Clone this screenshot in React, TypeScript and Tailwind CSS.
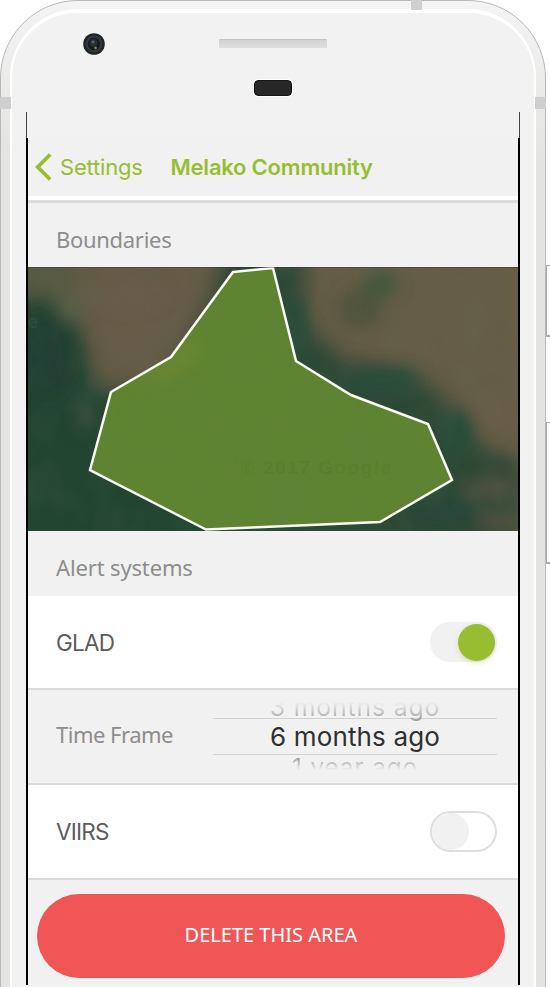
import React from "react";

const sans = "font-['Inter','Liberation_Sans',sans-serif]";
const human = "font-['Noto_Sans','Open_Sans',sans-serif]";

function TopHardware() {
  return (
    <div className="grid h-[99px] grid-cols-[206px_108px_1fr] grid-rows-[20px_22px_25px_17px_1fr]">
      <div className="col-start-1 row-start-2 pl-[70px]">
        <svg className="block" width="22" height="22" viewBox="0 0 22 22">
          <circle cx="11" cy="11" r="10.8" fill="#202428" />
          <circle cx="11" cy="11" r="8.4" fill="#34393e" />
          <circle cx="11" cy="11" r="6.2" fill="#15191d" />
          <circle cx="10.5" cy="10" r="4" fill="#252f38" />
          <circle cx="10" cy="9" r="1.6" fill="#56616a" />
          <circle cx="12.5" cy="15" r="1.3" fill="#839333" />
        </svg>
      </div>
      <div className="col-start-2 row-start-2 mt-[6px] h-[9px] rounded-[1px] border-t border-[#c4c4c4] bg-linear-to-b from-[#d2d2d2] to-[#dfdfdf]" />
      <div className="col-start-2 row-start-4 h-4 w-[38px] justify-self-center rounded-[4px] border border-[#151515] bg-[#272727] outline-1 outline-white" />
    </div>
  );
}

function NavBar() {
  return (
    <div className={`flex h-[65px] items-center border-b-[3px] border-[#dcdcdc] text-[#97be32] ${sans}`}>
      <div className="flex h-full w-full items-center border-b-4 border-white pl-[7px]">
        <svg className="block shrink-0" width="17" height="28" viewBox="0 0 17 28">
          <path d="M15.2 1.5 2.7 14 15.2 26.5" fill="none" stroke="#97be32" strokeWidth="3.8" />
        </svg>
        <span className="ml-2 w-[110.5px] text-[22px] tracking-[-0.2px]">Settings</span>
        <span className="whitespace-nowrap text-[22px] font-semibold tracking-[-0.22px]">Melako Community</span>
      </div>
    </div>
  );
}

function AreaMap() {
  const outline = "205,5 245,1 268,94 323,128 400,157 424,213 352,255 178,262.5 62,203 83,125 143,90";
  return (
    <svg className="block" width="490" height="264" viewBox="0 0 490 264">
      <defs>
        <filter id="soft" x="-50%" y="-50%" width="200%" height="200%">
          <feGaussianBlur stdDeviation="11" />
        </filter>
        <filter id="patch" x="-100%" y="-100%" width="300%" height="300%">
          <feGaussianBlur stdDeviation="8" />
        </filter>
        <filter id="terrain" x="0" y="0" width="100%" height="100%">
          <feTurbulence type="fractalNoise" baseFrequency="0.03 0.02" numOctaves="3" seed="8" />
          <feColorMatrix values="0 0 0 0 0.12  0 0 0 0 0.17  0 0 0 0 0.13  1.6 0 0 0 -0.65" />
        </filter>
        <clipPath id="frame"><rect width="490" height="264" /></clipPath>
        <clipPath id="field"><polygon points={outline} /></clipPath>
      </defs>
      <g clipPath="url(#frame)">
        <rect width="490" height="264" fill="#625c45" />
        <g filter="url(#soft)">
          <path d="M-30 28 35 32 56 70 68 125 110 120 240 264 500 300-30 300Z" fill="#234432" />
          <path d="M205-20 280-20 272 60 350 100 410 120 435 165 500 210 480 290 200 290 150 100Z" fill="#2d4936" />
          <path d="M-20-15 45-10 50 18-20 25Z" fill="#575940" />
          <path d="M60 10 175 4 155 70 90 112 65 70Z" fill="#675b49" />
          <path d="M285-10 510-10 510 180 460 165 415 115 320 92 300 72Z" fill="#665d46" />
        </g>
        <g filter="url(#patch)">
          <ellipse cx="208" cy="8" rx="8" ry="15" fill="#2f4a35" />
          <ellipse cx="352" cy="17" rx="18" ry="13" fill="#3d563a" opacity=".9" />
          <ellipse cx="332" cy="42" rx="24" ry="20" fill="#4b523b" opacity=".75" />
          <ellipse cx="267" cy="62" rx="13" ry="35" fill="#2b4b39" />
          <ellipse cx="355" cy="113" rx="38" ry="14" fill="#2a4d3b" />
          <ellipse cx="430" cy="165" rx="17" ry="24" fill="#264d39" />
          <ellipse cx="464" cy="222" rx="31" ry="10" fill="#514f40" />
          <ellipse cx="470" cy="145" rx="25" ry="20" fill="#695d4a" />
          <ellipse cx="475" cy="200" rx="16" ry="9" fill="#344a3a" />
          <ellipse cx="470" cy="255" rx="22" ry="9" fill="#57513f" />
          <ellipse cx="415" cy="245" rx="35" ry="17" fill="#28463a" />
          <ellipse cx="58" cy="150" rx="9" ry="14" fill="#465140" opacity=".8" />
          <ellipse cx="42" cy="40" rx="12" ry="13" fill="#5d6147" />
          <ellipse cx="18" cy="90" rx="26" ry="42" fill="#204134" />
          <ellipse cx="100" cy="27" rx="35" ry="13" fill="#6a5b4b" />
        </g>
        <rect width="490" height="264" filter="url(#terrain)" opacity=".2" />
        <polygon points={outline} fill="#5f8431" />
        <g clipPath="url(#field)">
          <path d="M105 120 165 72 175 85 145 110Z" fill="#7d8f32" opacity=".5" filter="url(#patch)" />
          <rect width="490" height="264" filter="url(#terrain)" opacity=".12" />
        </g>
        <text x="213" y="207" fill="#4e742b" opacity=".3" fontFamily="Liberation Sans, sans-serif" fontSize="19" fontWeight="bold" textLength="150">© 2017 Google</text>
        <text x="0" y="61" fill="#4d6752" opacity=".3" fontFamily="Liberation Sans, sans-serif" fontSize="18">e</text>
        <polygon points={outline} fill="none" stroke="#fbfcf6" strokeWidth="2.5" />
      </g>
      <path d="M0 .5H490" stroke="#2c2c22" strokeOpacity=".35" />
    </svg>
  );
}

function TimePicker() {
  return (
    <div className={`mr-[21px] h-[68px] w-[284px] text-center ${sans}`}>
      <div className="flex h-[15px] flex-col items-center justify-end">
        <div className="-mb-[4px] shrink-0 bg-linear-to-b from-transparent from-[10px] to-[#999] bg-clip-text text-[25px] leading-[30px] tracking-[0.75px] text-transparent">3 months ago</div>
      </div>
      <div className="h-[37px] border-y border-[#d3d3d3] text-[26px] leading-[36px] tracking-[0.15px] text-[#303030]">6 months ago</div>
      <div className="h-4">
        <div className="-mt-[2px] bg-linear-to-b from-[#999] from-[4px] to-transparent to-[17px] bg-clip-text text-[24.5px] leading-[28px] tracking-[0.8px] text-transparent">1 year ago</div>
      </div>
    </div>
  );
}

function Section({ title, spacing }: { title: string; spacing: string }) {
  return <h2 className={`pl-7 text-[22px] text-[#8d8d8d] ${spacing} ${human}`}>{title}</h2>;
}

function Screen() {
  return (
    <main className="ml-[13px] h-[847px] w-[494px] border-x-2 border-black bg-[#f1f1f1]">
      <NavBar />
      <div className="flex h-16 items-center pt-[8px]"><Section title="Boundaries" spacing="tracking-[-0.3px]" /></div>
      <AreaMap />
      <div className="flex h-[65px] items-center pt-[7px]"><Section title="Alert systems" spacing="tracking-[-0.15px]" /></div>
      <div className="flex h-[94px] items-center justify-between border-b-2 border-[#dadada] bg-white pl-7 pr-[21px]">
        <span className={`pt-px text-[22.5px] tracking-[-0.8px] text-[#5c5c5c] ${sans}`}>GLAD</span>
        <div className="flex h-10 w-[67px] items-center justify-end rounded-full bg-[#f1f1f1] pr-0.5">
          <div className="size-[37px] rounded-full bg-[#97be32] shadow-[0_2px_5px_rgba(151,190,50,0.3)]" />
        </div>
      </div>
      <div className="flex h-[95px] items-center justify-between border-b-2 border-[#dadada]">
        <div className="pb-[5px]"><Section title="Time Frame" spacing="tracking-[-0.5px]" /></div>
        <TimePicker />
      </div>
      <div className="flex h-[95px] items-center justify-between border-b-2 border-[#dadada] bg-white pl-7 pr-[21px]">
        <span className={`pt-px text-[22.5px] tracking-[-0.8px] text-[#5c5c5c] ${sans}`}>VIIRS</span>
        <div className="flex h-[41px] w-[67px] items-center rounded-full border-2 border-[#dedede] bg-white">
          <div className="size-[37px] rounded-full bg-[#f1f1f1]" />
        </div>
      </div>
      <div className="pl-[9px] pt-[14px]">
        <button className={`block h-[84px] w-[468px] rounded-full bg-[#f05656] pb-[3px] text-[20px] text-white ${human}`}>DELETE THIS AREA</button>
      </div>
    </main>
  );
}

export default function App() {
  return (
    <div className="relative h-[987px] w-[550px] overflow-hidden bg-white">
      <div className="h-[1020px] w-[546px] rounded-t-[78px] border border-[#b8b8b8] bg-linear-to-b from-[#f4f4f4] to-[#e3e3e1] to-[160px] px-[9px] pt-[8px]">
        <div className="h-full rounded-t-[68px] border-2 border-b-0 border-t-4 border-white bg-[#f2f2f2] pl-px">
          <TopHardware />
          <div className="ml-[13px] h-[26px] w-[494px] border-x border-[#444]" />
          <Screen />
        </div>
      </div>
      <div className="absolute left-[411px] top-0 h-[10px] w-[11px] bg-[#d0d0d0]" />
      <div className="absolute left-0 top-[97px] h-[12px] w-[11px] bg-[#cecfce]" />
      <div className="absolute left-[535px] top-[97px] h-[12px] w-[11px] bg-[#cecfce]" />
      <div className="absolute left-[546px] top-[265px] h-[72px] w-[5px] border border-b-2 border-[#aaa] bg-white" />
      <div className="absolute left-[546px] top-[422px] h-[142px] w-[5px] border border-b-2 border-[#aaa] bg-white" />
    </div>
  );
}
